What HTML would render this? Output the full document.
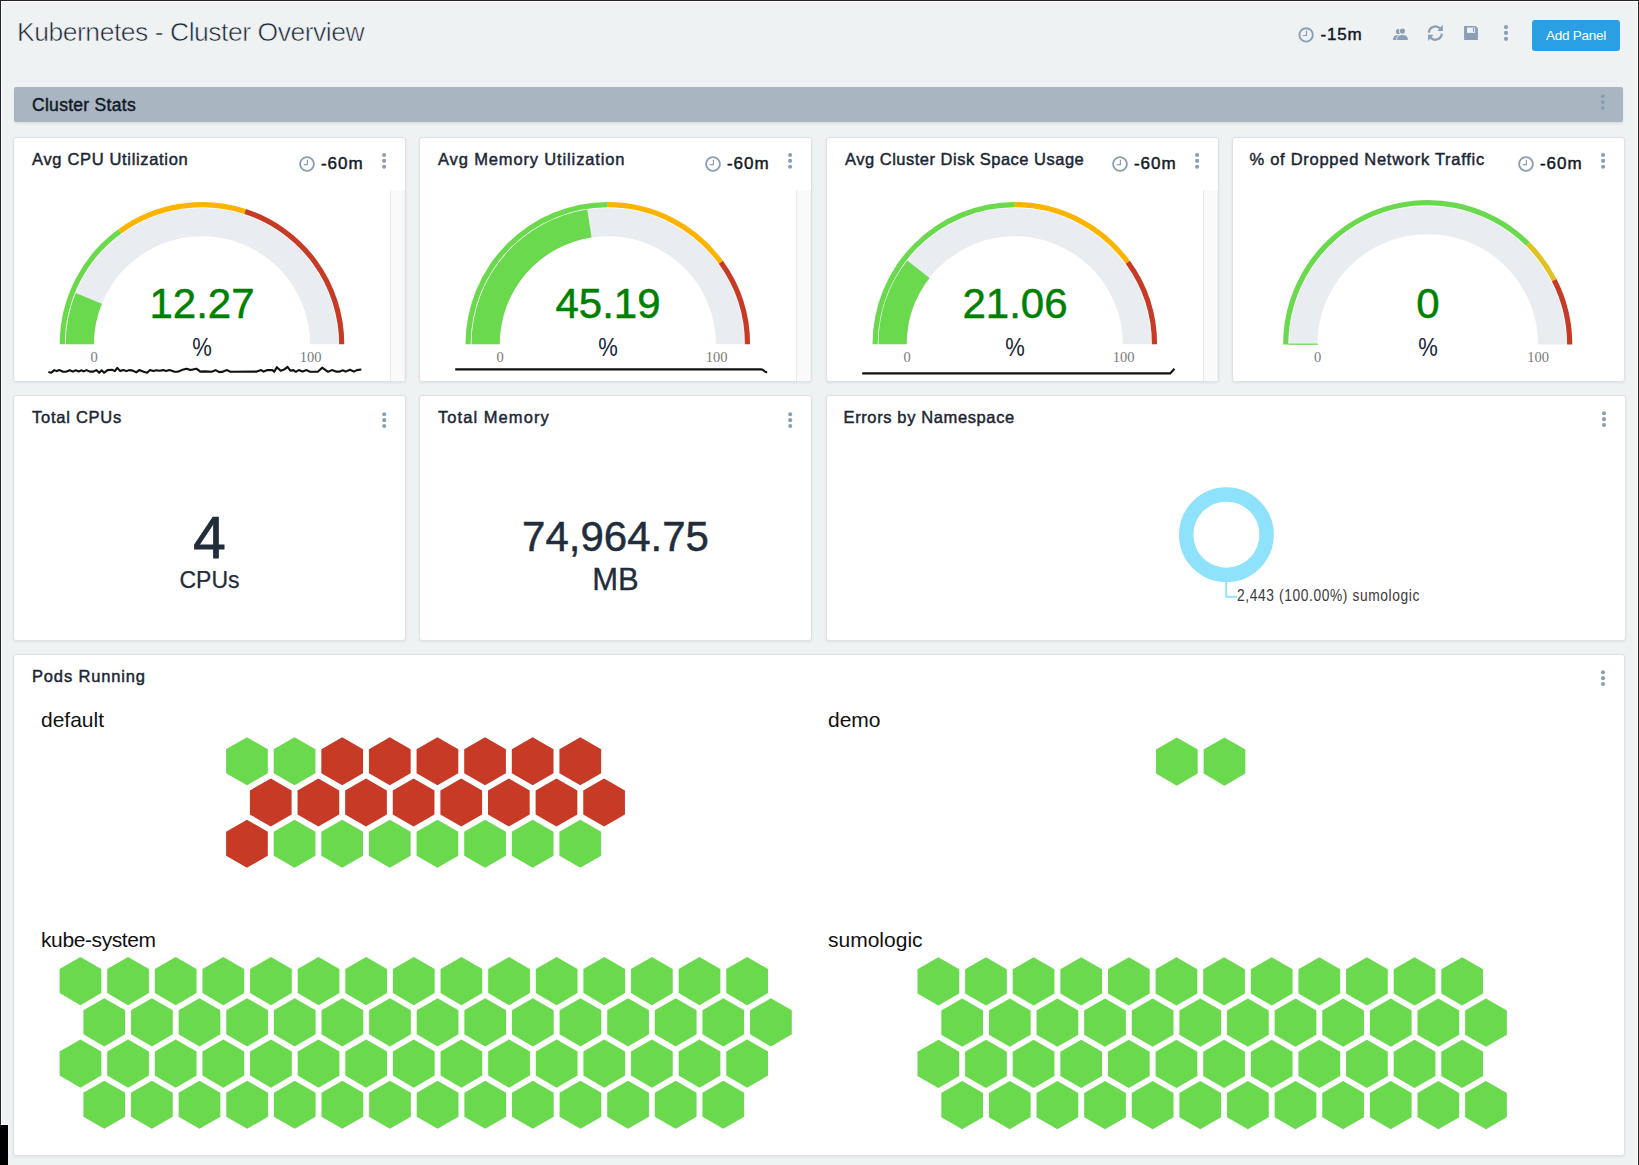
<!DOCTYPE html><html><head><meta charset="utf-8"><style>
*{margin:0;padding:0;box-sizing:border-box}
html,body{width:1639px;height:1165px;overflow:hidden;background:#eff2f3;font-family:"Liberation Sans", sans-serif;}
.abs{position:absolute;white-space:nowrap;line-height:1}
.panel{position:absolute;background:#fff;border:1px solid #dde2e7;border-radius:3px;box-shadow:0 1px 3px rgba(0,0,0,0.07)}
.ttl{position:absolute;font-size:16.5px;color:#1b2634;-webkit-text-stroke:0.45px #1b2634;white-space:nowrap;line-height:1}
.med{-webkit-text-stroke:0.45px currentColor}
svg{position:absolute;left:0;top:0}
</style></head><body>
<div style="position:absolute;left:1px;top:1px;width:1637px;height:1164px;border-top:1px solid #fff;border-left:1px solid #fff;border-right:1px solid #fff"></div>
<div style="position:absolute;left:0;top:0;width:1639px;height:1px;background:#232625"></div>
<div style="position:absolute;left:0;top:0;width:1px;height:1165px;background:#232625"></div>
<div style="position:absolute;left:1638px;top:0;width:1px;height:1165px;background:#232625"></div>
<div class="abs" style="left:17px;top:18.5px;font-size:26.5px;letter-spacing:-0.47px;color:#1a2533;-webkit-text-stroke:0.6px #eff2f3;">Kubernetes - Cluster Overview</div>
<div class="abs" style="left:1320.5px;top:25.8px;font-size:17px;letter-spacing:0.85px;-webkit-text-stroke:0.45px #111a24;color:#111a24;">-15m</div>
<div style="position:absolute;left:1532px;top:20px;width:88px;height:31px;background:#2a9fe4;border-radius:3px"></div>
<div class="abs" style="left:1546px;top:28.5px;font-size:13.5px;letter-spacing:-0.25px;color:#fff;">Add Panel</div>
<div style="position:absolute;left:14px;top:87px;width:1609px;height:34.5px;background:#aab5c2;border-radius:2px;box-shadow:0 2px 3px rgba(0,0,0,0.08)"></div>
<div class="abs" style="left:32px;top:97px;font-size:17.5px;letter-spacing:0.29px;-webkit-text-stroke:0.45px #111b27;color:#111b27;">Cluster Stats</div>
<div class="panel" style="left:13px;top:137px;width:393px;height:245px"></div>
<div class="ttl" style="left:32px;top:151px;letter-spacing:0.67px">Avg CPU Utilization</div>
<div class="abs" style="left:321px;top:155.2px;font-size:17px;letter-spacing:0.95px;-webkit-text-stroke:0.45px #111a24;color:#111a24">-60m</div>
<div class="panel" style="left:419px;top:137px;width:393px;height:245px"></div>
<div class="ttl" style="left:438px;top:151px;letter-spacing:0.86px">Avg Memory Utilization</div>
<div class="abs" style="left:727px;top:155.2px;font-size:17px;letter-spacing:0.95px;-webkit-text-stroke:0.45px #111a24;color:#111a24">-60m</div>
<div class="panel" style="left:826px;top:137px;width:393px;height:245px"></div>
<div class="ttl" style="left:845px;top:151px;letter-spacing:0.5px">Avg Cluster Disk Space Usage</div>
<div class="abs" style="left:1134px;top:155.2px;font-size:17px;letter-spacing:0.95px;-webkit-text-stroke:0.45px #111a24;color:#111a24">-60m</div>
<div class="panel" style="left:1232px;top:137px;width:393px;height:245px"></div>
<div class="ttl" style="left:1249.5px;top:151px;letter-spacing:0.72px">% of Dropped Network Traffic</div>
<div class="abs" style="left:1540px;top:155.2px;font-size:17px;letter-spacing:0.95px;-webkit-text-stroke:0.45px #111a24;color:#111a24">-60m</div>
<div class="panel" style="left:13px;top:395px;width:393px;height:246px"></div>
<div class="ttl" style="left:32px;top:409px;letter-spacing:0.75px">Total CPUs</div>
<div class="panel" style="left:419px;top:395px;width:393px;height:246px"></div>
<div class="ttl" style="left:438px;top:409px;letter-spacing:1.06px">Total Memory</div>
<div class="panel" style="left:826px;top:395px;width:800px;height:246px"></div>
<div class="ttl" style="left:843.5px;top:409px;letter-spacing:0.62px">Errors by Namespace</div>
<div class="panel" style="left:13px;top:654px;width:1612px;height:502px"></div>
<div class="ttl" style="left:32px;top:668px;letter-spacing:.84px">Pods Running</div>
<div class="abs" style="left:0;top:283px;width:404px;text-align:center;font-size:42px;-webkit-text-stroke:0.5px #008000;color:#008000">12.27</div>
<div class="abs" style="left:406px;top:283px;width:404px;text-align:center;font-size:42px;-webkit-text-stroke:0.5px #008000;color:#008000">45.19</div>
<div class="abs" style="left:813px;top:283px;width:404px;text-align:center;font-size:42px;-webkit-text-stroke:0.5px #008000;color:#008000">21.06</div>
<div class="abs" style="left:1226px;top:283px;width:404px;text-align:center;font-size:42px;-webkit-text-stroke:0.5px #008000;color:#008000">0</div>
<div class="abs" style="left:152px;top:334.5px;width:100px;text-align:center;font-size:25px;transform:scaleX(0.88);color:#1b2634">%</div>
<div class="abs" style="left:558px;top:334.5px;width:100px;text-align:center;font-size:25px;transform:scaleX(0.88);color:#1b2634">%</div>
<div class="abs" style="left:965px;top:334.5px;width:100px;text-align:center;font-size:25px;transform:scaleX(0.88);color:#1b2634">%</div>
<div class="abs" style="left:1378px;top:334.5px;width:100px;text-align:center;font-size:25px;transform:scaleX(0.88);color:#1b2634">%</div>
<div class="abs" style="left:74px;top:350px;width:40px;text-align:center;font-family:'Liberation Serif',serif;font-size:14.5px;color:#7a7a7a">0</div>
<div class="abs" style="left:290.5px;top:350px;width:40px;text-align:center;font-family:'Liberation Serif',serif;font-size:14.5px;color:#7a7a7a">100</div>
<div class="abs" style="left:480px;top:350px;width:40px;text-align:center;font-family:'Liberation Serif',serif;font-size:14.5px;color:#7a7a7a">0</div>
<div class="abs" style="left:696.5px;top:350px;width:40px;text-align:center;font-family:'Liberation Serif',serif;font-size:14.5px;color:#7a7a7a">100</div>
<div class="abs" style="left:887px;top:350px;width:40px;text-align:center;font-family:'Liberation Serif',serif;font-size:14.5px;color:#7a7a7a">0</div>
<div class="abs" style="left:1103.5px;top:350px;width:40px;text-align:center;font-family:'Liberation Serif',serif;font-size:14.5px;color:#7a7a7a">100</div>
<div class="abs" style="left:1297.5px;top:350px;width:40px;text-align:center;font-family:'Liberation Serif',serif;font-size:14.5px;color:#7a7a7a">0</div>
<div class="abs" style="left:1518px;top:350px;width:40px;text-align:center;font-family:'Liberation Serif',serif;font-size:14.5px;color:#7a7a7a">100</div>
<div style="position:absolute;left:390px;top:190px;width:15px;height:191px;background:#fafafa;border-left:1px solid #e9e9e9;border-right:1px solid #f0f0f0"></div>
<div style="position:absolute;left:796px;top:190px;width:15px;height:191px;background:#fafafa;border-left:1px solid #e9e9e9;border-right:1px solid #f0f0f0"></div>
<div style="position:absolute;left:1203px;top:190px;width:15px;height:191px;background:#fafafa;border-left:1px solid #e9e9e9;border-right:1px solid #f0f0f0"></div>
<div class="abs" style="left:14px;top:508.5px;width:391px;text-align:center;font-size:59px;-webkit-text-stroke:0.75px #222d3b;color:#222d3b">4</div>
<div class="abs" style="left:14px;top:569px;width:391px;text-align:center;font-size:23px;-webkit-text-stroke:0.25px #222d3b;color:#222d3b">CPUs</div>
<div class="abs" style="left:420px;top:515.7px;width:391px;text-align:center;font-size:42px;-webkit-text-stroke:0.5px #222d3b;color:#222d3b">74,964.75</div>
<div class="abs" style="left:420px;top:564px;width:391px;text-align:center;font-size:31px;-webkit-text-stroke:0.35px #222d3b;color:#222d3b">MB</div>
<div class="abs" style="left:1237px;top:588px;font-size:16px;color:#3a3a3a;transform-origin:0 0;transform:scaleX(0.86);letter-spacing:0.72px">2,443 (100.00%) sumologic</div>
<div class="abs" style="left:41px;top:709px;font-size:21px;letter-spacing:0px;color:#111">default</div>
<div class="abs" style="left:828px;top:709px;font-size:21px;letter-spacing:0px;color:#111">demo</div>
<div class="abs" style="left:41px;top:929px;font-size:21px;letter-spacing:-0.4px;color:#111">kube-system</div>
<div class="abs" style="left:828px;top:929px;font-size:21px;letter-spacing:0px;color:#111">sumologic</div>
<svg width="1639" height="1165" viewBox="0 0 1639 1165">
<path d="M65.70,344.30 A136.3,136.3 0 0 1 338.30,344.30 L310.10,344.30 A108.10000000000001,108.10000000000001 0 0 0 93.90,344.30 Z" fill="#e9edf1"/>
<path d="M59.70,344.30 A142.3,142.3 0 0 1 118.36,229.18 L121.41,233.38 A137.10000000000002,137.10000000000002 0 0 0 64.90,344.30 Z" fill="#6ad94d"/>
<path d="M118.36,229.18 A142.3,142.3 0 0 1 245.97,208.96 L244.37,213.91 A137.10000000000002,137.10000000000002 0 0 0 121.41,233.38 Z" fill="#fdb300"/>
<path d="M245.97,208.96 A142.3,142.3 0 0 1 344.30,344.30 L339.10,344.30 A137.10000000000002,137.10000000000002 0 0 0 244.37,213.91 Z" fill="#c63a26"/>
<path d="M65.70,344.30 A136.3,136.3 0 0 1 75.70,293.05 L101.83,303.65 A108.10000000000001,108.10000000000001 0 0 0 93.90,344.30 Z" fill="#6ad94d"/>
<path d="M471.50,344.30 A136.3,136.3 0 0 1 744.10,344.30 L715.90,344.30 A108.10000000000001,108.10000000000001 0 0 0 499.70,344.30 Z" fill="#e9edf1"/>
<path d="M465.50,344.30 A142.3,142.3 0 0 1 607.80,202.00 L607.80,207.20 A137.10000000000002,137.10000000000002 0 0 0 470.70,344.30 Z" fill="#6ad94d"/>
<path d="M607.80,202.00 A142.3,142.3 0 0 1 722.92,260.66 L718.72,263.71 A137.10000000000002,137.10000000000002 0 0 0 607.80,207.20 Z" fill="#fdb300"/>
<path d="M722.92,260.66 A142.3,142.3 0 0 1 750.10,344.30 L744.90,344.30 A137.10000000000002,137.10000000000002 0 0 0 718.72,263.71 Z" fill="#c63a26"/>
<path d="M471.50,344.30 A136.3,136.3 0 0 1 587.28,209.55 L591.53,237.43 A108.10000000000001,108.10000000000001 0 0 0 499.70,344.30 Z" fill="#6ad94d"/>
<path d="M878.50,344.30 A136.3,136.3 0 0 1 1151.10,344.30 L1122.90,344.30 A108.10000000000001,108.10000000000001 0 0 0 906.70,344.30 Z" fill="#e9edf1"/>
<path d="M872.50,344.30 A142.3,142.3 0 0 1 1014.80,202.00 L1014.80,207.20 A137.10000000000002,137.10000000000002 0 0 0 877.70,344.30 Z" fill="#6ad94d"/>
<path d="M1014.80,202.00 A142.3,142.3 0 0 1 1129.92,260.66 L1125.72,263.71 A137.10000000000002,137.10000000000002 0 0 0 1014.80,207.20 Z" fill="#fdb300"/>
<path d="M1129.92,260.66 A142.3,142.3 0 0 1 1157.10,344.30 L1151.90,344.30 A137.10000000000002,137.10000000000002 0 0 0 1125.72,263.71 Z" fill="#c63a26"/>
<path d="M878.50,344.30 A136.3,136.3 0 0 1 907.26,260.56 L929.51,277.88 A108.10000000000001,108.10000000000001 0 0 0 906.70,344.30 Z" fill="#6ad94d"/>
<path d="M1289.10,344.60 A138.6,138.6 0 0 1 1566.30,344.60 L1538.10,344.60 A110.39999999999999,110.39999999999999 0 0 0 1317.30,344.60 Z" fill="#e9edf1"/>
<path d="M1283.10,344.60 A144.6,144.6 0 0 1 1529.95,242.35 L1526.27,246.03 A139.4,139.4 0 0 0 1288.30,344.60 Z" fill="#6ad94d"/>
<path d="M1529.95,242.35 A144.6,144.6 0 0 1 1556.54,278.95 L1551.91,281.31 A139.4,139.4 0 0 0 1526.27,246.03 Z" fill="#e2c221"/>
<path d="M1556.54,278.95 A144.6,144.6 0 0 1 1572.30,344.60 L1567.10,344.60 A139.4,139.4 0 0 0 1551.91,281.31 Z" fill="#c63a26"/>
<rect x="1288.5" y="343.6" width="29.4" height="1.2" fill="#6ad94d"/>
<circle cx="1306.1" cy="34.9" r="6.7" fill="none" stroke="#8a9fb6" stroke-width="1.9"/><path d="M1306.5,30.599999999999998 V35.5 H1302.8999999999999" fill="none" stroke="#8a9fb6" stroke-width="1.2"/>
<circle cx="307" cy="164" r="6.8999999999999995" fill="none" stroke="#8a9fb6" stroke-width="1.9"/><path d="M307.4,159.7 V164.6 H303.8" fill="none" stroke="#8a9fb6" stroke-width="1.2"/>
<circle cx="713" cy="164" r="6.8999999999999995" fill="none" stroke="#8a9fb6" stroke-width="1.9"/><path d="M713.4,159.7 V164.6 H709.8" fill="none" stroke="#8a9fb6" stroke-width="1.2"/>
<circle cx="1120" cy="164" r="6.8999999999999995" fill="none" stroke="#8a9fb6" stroke-width="1.9"/><path d="M1120.4,159.7 V164.6 H1116.8" fill="none" stroke="#8a9fb6" stroke-width="1.2"/>
<circle cx="1526" cy="164" r="6.8999999999999995" fill="none" stroke="#8a9fb6" stroke-width="1.9"/><path d="M1526.4,159.7 V164.6 H1522.8" fill="none" stroke="#8a9fb6" stroke-width="1.2"/>
<circle cx="384.1" cy="155.0" r="2.05" fill="#8a9fb6"/><circle cx="384.1" cy="160.85" r="2.05" fill="#8a9fb6"/><circle cx="384.1" cy="166.7" r="2.05" fill="#8a9fb6"/>
<circle cx="790.1" cy="155.0" r="2.05" fill="#8a9fb6"/><circle cx="790.1" cy="160.85" r="2.05" fill="#8a9fb6"/><circle cx="790.1" cy="166.7" r="2.05" fill="#8a9fb6"/>
<circle cx="1197.1" cy="155.0" r="2.05" fill="#8a9fb6"/><circle cx="1197.1" cy="160.85" r="2.05" fill="#8a9fb6"/><circle cx="1197.1" cy="166.7" r="2.05" fill="#8a9fb6"/>
<circle cx="1603.1" cy="155.0" r="2.05" fill="#8a9fb6"/><circle cx="1603.1" cy="160.85" r="2.05" fill="#8a9fb6"/><circle cx="1603.1" cy="166.7" r="2.05" fill="#8a9fb6"/>
<circle cx="384.2" cy="414.3" r="2.05" fill="#8a9fb6"/><circle cx="384.2" cy="420.15000000000003" r="2.05" fill="#8a9fb6"/><circle cx="384.2" cy="426.0" r="2.05" fill="#8a9fb6"/>
<circle cx="790.2" cy="414.3" r="2.05" fill="#8a9fb6"/><circle cx="790.2" cy="420.15000000000003" r="2.05" fill="#8a9fb6"/><circle cx="790.2" cy="426.0" r="2.05" fill="#8a9fb6"/>
<circle cx="1604" cy="413.3" r="2.05" fill="#8a9fb6"/><circle cx="1604" cy="419.15000000000003" r="2.05" fill="#8a9fb6"/><circle cx="1604" cy="425.0" r="2.05" fill="#8a9fb6"/>
<circle cx="1603" cy="672.3" r="2.05" fill="#8a9fb6"/><circle cx="1603" cy="678.15" r="2.05" fill="#8a9fb6"/><circle cx="1603" cy="684.0" r="2.05" fill="#8a9fb6"/>
<circle cx="1506" cy="27.1" r="2.15" fill="#8a9fb6"/><circle cx="1506" cy="32.95" r="2.15" fill="#8a9fb6"/><circle cx="1506" cy="38.8" r="2.15" fill="#8a9fb6"/>
<circle cx="1602.7" cy="96.24" r="2.0" fill="#8a9fb6"/><circle cx="1602.7" cy="102.07" r="2.0" fill="#8a9fb6"/><circle cx="1602.7" cy="107.89999999999999" r="2.0" fill="#8a9fb6"/>
<g transform="translate(1390,22)"><circle cx="8.45" cy="9.55" r="2.55" fill="#8a9fb6"/><g transform="translate(-4,0)"><path d="M7.1,17.9 L7.1,16.4 C7.6,14.2 9.2,13 12.4,13 C15.6,13 17.2,14.2 17.8,16.4 L17.8,17.9 Z" fill="#8a9fb6"/></g><circle cx="12.45" cy="9.05" r="3.5" fill="#eff2f3"/><path d="M7.1,17.9 L7.1,16.4 C7.6,14.2 9.2,13 12.4,13 C15.6,13 17.2,14.2 17.8,16.4 L17.8,17.9 Z" fill="#8a9fb6" stroke="#eff2f3" stroke-width="1.6"/><path d="M7.1,17.9 L7.1,16.4 C7.6,14.2 9.2,13 12.4,13 C15.6,13 17.2,14.2 17.8,16.4 L17.8,17.9 Z" fill="#8a9fb6"/><circle cx="12.45" cy="9.05" r="2.55" fill="#8a9fb6"/></g>
<g transform="translate(1424,22)" fill="none" stroke="#8a9fb6" stroke-width="2.2"><path d="M4.8,10.6 A6.6,6.6 0 0 1 16.2,6.6"/><path d="M17.8,11.6 A6.6,6.6 0 0 1 6.4,15.6"/></g><g transform="translate(1424,22)" fill="#8a9fb6"><path d="M18.8,2.8 L18.9,9.1 L13.3,8.9 Z"/><path d="M4.1,19.0 L4.0,12.7 L9.6,12.8 Z"/></g>
<g transform="translate(1460,22)"><path d="M4.06,4.06 H15.7 L17.9,6.3 V17.9 H4.06 Z" fill="#8a9fb6"/><rect x="7" y="5.5" width="8.1" height="5.4" fill="#eff2f3"/><rect x="13" y="6" width="1.2" height="3.8" fill="#8a9fb6"/></g>
<polyline points="48.4,372.1 51.3,372.8 54.3,370.1 56.7,371.1 59.6,370.1 63.1,371.8 66.5,371.6 69.9,370.3 72.8,371.6 75.8,370.3 78.7,371.4 81.6,370.3 83.6,371.4 86.5,370.1 89.9,371.6 93.3,371.6 96.3,370.1 99.2,372.8 101.6,370.3 104.1,372.8 107.5,370.1 112.4,369.8 114.8,371.1 117.3,367.9 120.2,371.1 123.1,370.1 126.5,371.1 129,370.1 132.9,370.6 136.3,372.4 139.2,370.1 143.6,371.8 147.1,372.8 150,370.1 153.4,371.1 156.3,370.3 159.7,370.8 163.2,370.1 166.1,371.1 169.5,370.1 173.9,371.6 177.8,371.8 181.7,370.1 186.6,368.7 190.5,370.1 196.4,368.7 200.3,371.6 205,371.4 211.8,371.8 215.7,370.1 219.2,372.1 223.1,371.6 227,370.1 230.4,371.8 256.8,371.6 261.1,370.1 263.6,371.6 267.5,370.1 272.4,370.1 274.3,371.8 276.8,367.2 280.7,370.8 284.1,369.6 287.5,366.9 290.4,370.6 293.4,370.1 295.8,371.8 298.7,370.1 302.6,371.6 306.6,370.1 310,371.8 317.8,371.8 322.2,367.7 328,371.8 332,370.1 335.9,371.6 339.8,371.6 342.7,370.3 345.6,371.6 350,369.8 353.9,371.6 356.9,370.1 361.3,369.5" fill="none" stroke="#111" stroke-width="2.1" stroke-linejoin="round"/>
<path d="M455.2,369.4 H760.8 Q763,369.4 764.5,371.2 Q765.5,372.2 767.2,372.2" fill="none" stroke="#111" stroke-width="2.1"/>
<path d="M862.2,373.4 H1170.2 L1174.4,368.8" fill="none" stroke="#111" stroke-width="2.1"/>
<circle cx="1226.4" cy="534.7" r="40.2" fill="none" stroke="#8ee2fc" stroke-width="14.4"/>
<path d="M1226.2,582 V596.8 H1237" fill="none" stroke="#8ee2fc" stroke-width="1.8"/>
<polygon points="246.95,737.20 267.80,749.24 267.80,773.31 246.95,785.35 226.10,773.31 226.10,749.24" fill="#6ad94d"/>
<polygon points="294.57,737.20 315.42,749.24 315.42,773.31 294.57,785.35 273.72,773.31 273.72,749.24" fill="#6ad94d"/>
<polygon points="342.19,737.20 363.04,749.24 363.04,773.31 342.19,785.35 321.34,773.31 321.34,749.24" fill="#c63a26"/>
<polygon points="389.81,737.20 410.66,749.24 410.66,773.31 389.81,785.35 368.96,773.31 368.96,749.24" fill="#c63a26"/>
<polygon points="437.43,737.20 458.28,749.24 458.28,773.31 437.43,785.35 416.58,773.31 416.58,749.24" fill="#c63a26"/>
<polygon points="485.05,737.20 505.90,749.24 505.90,773.31 485.05,785.35 464.20,773.31 464.20,749.24" fill="#c63a26"/>
<polygon points="532.67,737.20 553.52,749.24 553.52,773.31 532.67,785.35 511.82,773.31 511.82,749.24" fill="#c63a26"/>
<polygon points="580.29,737.20 601.14,749.24 601.14,773.31 580.29,785.35 559.44,773.31 559.44,749.24" fill="#c63a26"/>
<polygon points="270.76,778.44 291.61,790.48 291.61,814.55 270.76,826.59 249.91,814.55 249.91,790.48" fill="#c63a26"/>
<polygon points="318.38,778.44 339.23,790.48 339.23,814.55 318.38,826.59 297.53,814.55 297.53,790.48" fill="#c63a26"/>
<polygon points="366.00,778.44 386.85,790.48 386.85,814.55 366.00,826.59 345.15,814.55 345.15,790.48" fill="#c63a26"/>
<polygon points="413.62,778.44 434.47,790.48 434.47,814.55 413.62,826.59 392.77,814.55 392.77,790.48" fill="#c63a26"/>
<polygon points="461.24,778.44 482.09,790.48 482.09,814.55 461.24,826.59 440.39,814.55 440.39,790.48" fill="#c63a26"/>
<polygon points="508.86,778.44 529.71,790.48 529.71,814.55 508.86,826.59 488.01,814.55 488.01,790.48" fill="#c63a26"/>
<polygon points="556.48,778.44 577.33,790.48 577.33,814.55 556.48,826.59 535.63,814.55 535.63,790.48" fill="#c63a26"/>
<polygon points="604.10,778.44 624.95,790.48 624.95,814.55 604.10,826.59 583.25,814.55 583.25,790.48" fill="#c63a26"/>
<polygon points="246.95,819.68 267.80,831.72 267.80,855.79 246.95,867.83 226.10,855.79 226.10,831.72" fill="#c63a26"/>
<polygon points="294.57,819.68 315.42,831.72 315.42,855.79 294.57,867.83 273.72,855.79 273.72,831.72" fill="#6ad94d"/>
<polygon points="342.19,819.68 363.04,831.72 363.04,855.79 342.19,867.83 321.34,855.79 321.34,831.72" fill="#6ad94d"/>
<polygon points="389.81,819.68 410.66,831.72 410.66,855.79 389.81,867.83 368.96,855.79 368.96,831.72" fill="#6ad94d"/>
<polygon points="437.43,819.68 458.28,831.72 458.28,855.79 437.43,867.83 416.58,855.79 416.58,831.72" fill="#6ad94d"/>
<polygon points="485.05,819.68 505.90,831.72 505.90,855.79 485.05,867.83 464.20,855.79 464.20,831.72" fill="#6ad94d"/>
<polygon points="532.67,819.68 553.52,831.72 553.52,855.79 532.67,867.83 511.82,855.79 511.82,831.72" fill="#6ad94d"/>
<polygon points="580.29,819.68 601.14,831.72 601.14,855.79 580.29,867.83 559.44,855.79 559.44,831.72" fill="#6ad94d"/>
<polygon points="1176.85,737.50 1197.70,749.54 1197.70,773.61 1176.85,785.65 1156.00,773.61 1156.00,749.54" fill="#6ad94d"/>
<polygon points="1224.47,737.50 1245.32,749.54 1245.32,773.61 1224.47,785.65 1203.62,773.61 1203.62,749.54" fill="#6ad94d"/>
<polygon points="80.45,957.00 101.30,969.04 101.30,993.11 80.45,1005.15 59.60,993.11 59.60,969.04" fill="#6ad94d"/>
<polygon points="128.07,957.00 148.92,969.04 148.92,993.11 128.07,1005.15 107.22,993.11 107.22,969.04" fill="#6ad94d"/>
<polygon points="175.69,957.00 196.54,969.04 196.54,993.11 175.69,1005.15 154.84,993.11 154.84,969.04" fill="#6ad94d"/>
<polygon points="223.31,957.00 244.16,969.04 244.16,993.11 223.31,1005.15 202.46,993.11 202.46,969.04" fill="#6ad94d"/>
<polygon points="270.93,957.00 291.78,969.04 291.78,993.11 270.93,1005.15 250.08,993.11 250.08,969.04" fill="#6ad94d"/>
<polygon points="318.55,957.00 339.40,969.04 339.40,993.11 318.55,1005.15 297.70,993.11 297.70,969.04" fill="#6ad94d"/>
<polygon points="366.17,957.00 387.02,969.04 387.02,993.11 366.17,1005.15 345.32,993.11 345.32,969.04" fill="#6ad94d"/>
<polygon points="413.79,957.00 434.64,969.04 434.64,993.11 413.79,1005.15 392.94,993.11 392.94,969.04" fill="#6ad94d"/>
<polygon points="461.41,957.00 482.26,969.04 482.26,993.11 461.41,1005.15 440.56,993.11 440.56,969.04" fill="#6ad94d"/>
<polygon points="509.03,957.00 529.88,969.04 529.88,993.11 509.03,1005.15 488.18,993.11 488.18,969.04" fill="#6ad94d"/>
<polygon points="556.65,957.00 577.50,969.04 577.50,993.11 556.65,1005.15 535.80,993.11 535.80,969.04" fill="#6ad94d"/>
<polygon points="604.27,957.00 625.12,969.04 625.12,993.11 604.27,1005.15 583.42,993.11 583.42,969.04" fill="#6ad94d"/>
<polygon points="651.89,957.00 672.74,969.04 672.74,993.11 651.89,1005.15 631.04,993.11 631.04,969.04" fill="#6ad94d"/>
<polygon points="699.51,957.00 720.36,969.04 720.36,993.11 699.51,1005.15 678.66,993.11 678.66,969.04" fill="#6ad94d"/>
<polygon points="747.13,957.00 767.98,969.04 767.98,993.11 747.13,1005.15 726.28,993.11 726.28,969.04" fill="#6ad94d"/>
<polygon points="104.26,998.24 125.11,1010.28 125.11,1034.35 104.26,1046.39 83.41,1034.35 83.41,1010.28" fill="#6ad94d"/>
<polygon points="151.88,998.24 172.73,1010.28 172.73,1034.35 151.88,1046.39 131.03,1034.35 131.03,1010.28" fill="#6ad94d"/>
<polygon points="199.50,998.24 220.35,1010.28 220.35,1034.35 199.50,1046.39 178.65,1034.35 178.65,1010.28" fill="#6ad94d"/>
<polygon points="247.12,998.24 267.97,1010.28 267.97,1034.35 247.12,1046.39 226.27,1034.35 226.27,1010.28" fill="#6ad94d"/>
<polygon points="294.74,998.24 315.59,1010.28 315.59,1034.35 294.74,1046.39 273.89,1034.35 273.89,1010.28" fill="#6ad94d"/>
<polygon points="342.36,998.24 363.21,1010.28 363.21,1034.35 342.36,1046.39 321.51,1034.35 321.51,1010.28" fill="#6ad94d"/>
<polygon points="389.98,998.24 410.83,1010.28 410.83,1034.35 389.98,1046.39 369.13,1034.35 369.13,1010.28" fill="#6ad94d"/>
<polygon points="437.60,998.24 458.45,1010.28 458.45,1034.35 437.60,1046.39 416.75,1034.35 416.75,1010.28" fill="#6ad94d"/>
<polygon points="485.22,998.24 506.07,1010.28 506.07,1034.35 485.22,1046.39 464.37,1034.35 464.37,1010.28" fill="#6ad94d"/>
<polygon points="532.84,998.24 553.69,1010.28 553.69,1034.35 532.84,1046.39 511.99,1034.35 511.99,1010.28" fill="#6ad94d"/>
<polygon points="580.46,998.24 601.31,1010.28 601.31,1034.35 580.46,1046.39 559.61,1034.35 559.61,1010.28" fill="#6ad94d"/>
<polygon points="628.08,998.24 648.93,1010.28 648.93,1034.35 628.08,1046.39 607.23,1034.35 607.23,1010.28" fill="#6ad94d"/>
<polygon points="675.70,998.24 696.55,1010.28 696.55,1034.35 675.70,1046.39 654.85,1034.35 654.85,1010.28" fill="#6ad94d"/>
<polygon points="723.32,998.24 744.17,1010.28 744.17,1034.35 723.32,1046.39 702.47,1034.35 702.47,1010.28" fill="#6ad94d"/>
<polygon points="770.94,998.24 791.79,1010.28 791.79,1034.35 770.94,1046.39 750.09,1034.35 750.09,1010.28" fill="#6ad94d"/>
<polygon points="80.45,1039.48 101.30,1051.52 101.30,1075.59 80.45,1087.63 59.60,1075.59 59.60,1051.52" fill="#6ad94d"/>
<polygon points="128.07,1039.48 148.92,1051.52 148.92,1075.59 128.07,1087.63 107.22,1075.59 107.22,1051.52" fill="#6ad94d"/>
<polygon points="175.69,1039.48 196.54,1051.52 196.54,1075.59 175.69,1087.63 154.84,1075.59 154.84,1051.52" fill="#6ad94d"/>
<polygon points="223.31,1039.48 244.16,1051.52 244.16,1075.59 223.31,1087.63 202.46,1075.59 202.46,1051.52" fill="#6ad94d"/>
<polygon points="270.93,1039.48 291.78,1051.52 291.78,1075.59 270.93,1087.63 250.08,1075.59 250.08,1051.52" fill="#6ad94d"/>
<polygon points="318.55,1039.48 339.40,1051.52 339.40,1075.59 318.55,1087.63 297.70,1075.59 297.70,1051.52" fill="#6ad94d"/>
<polygon points="366.17,1039.48 387.02,1051.52 387.02,1075.59 366.17,1087.63 345.32,1075.59 345.32,1051.52" fill="#6ad94d"/>
<polygon points="413.79,1039.48 434.64,1051.52 434.64,1075.59 413.79,1087.63 392.94,1075.59 392.94,1051.52" fill="#6ad94d"/>
<polygon points="461.41,1039.48 482.26,1051.52 482.26,1075.59 461.41,1087.63 440.56,1075.59 440.56,1051.52" fill="#6ad94d"/>
<polygon points="509.03,1039.48 529.88,1051.52 529.88,1075.59 509.03,1087.63 488.18,1075.59 488.18,1051.52" fill="#6ad94d"/>
<polygon points="556.65,1039.48 577.50,1051.52 577.50,1075.59 556.65,1087.63 535.80,1075.59 535.80,1051.52" fill="#6ad94d"/>
<polygon points="604.27,1039.48 625.12,1051.52 625.12,1075.59 604.27,1087.63 583.42,1075.59 583.42,1051.52" fill="#6ad94d"/>
<polygon points="651.89,1039.48 672.74,1051.52 672.74,1075.59 651.89,1087.63 631.04,1075.59 631.04,1051.52" fill="#6ad94d"/>
<polygon points="699.51,1039.48 720.36,1051.52 720.36,1075.59 699.51,1087.63 678.66,1075.59 678.66,1051.52" fill="#6ad94d"/>
<polygon points="747.13,1039.48 767.98,1051.52 767.98,1075.59 747.13,1087.63 726.28,1075.59 726.28,1051.52" fill="#6ad94d"/>
<polygon points="104.26,1080.72 125.11,1092.76 125.11,1116.83 104.26,1128.87 83.41,1116.83 83.41,1092.76" fill="#6ad94d"/>
<polygon points="151.88,1080.72 172.73,1092.76 172.73,1116.83 151.88,1128.87 131.03,1116.83 131.03,1092.76" fill="#6ad94d"/>
<polygon points="199.50,1080.72 220.35,1092.76 220.35,1116.83 199.50,1128.87 178.65,1116.83 178.65,1092.76" fill="#6ad94d"/>
<polygon points="247.12,1080.72 267.97,1092.76 267.97,1116.83 247.12,1128.87 226.27,1116.83 226.27,1092.76" fill="#6ad94d"/>
<polygon points="294.74,1080.72 315.59,1092.76 315.59,1116.83 294.74,1128.87 273.89,1116.83 273.89,1092.76" fill="#6ad94d"/>
<polygon points="342.36,1080.72 363.21,1092.76 363.21,1116.83 342.36,1128.87 321.51,1116.83 321.51,1092.76" fill="#6ad94d"/>
<polygon points="389.98,1080.72 410.83,1092.76 410.83,1116.83 389.98,1128.87 369.13,1116.83 369.13,1092.76" fill="#6ad94d"/>
<polygon points="437.60,1080.72 458.45,1092.76 458.45,1116.83 437.60,1128.87 416.75,1116.83 416.75,1092.76" fill="#6ad94d"/>
<polygon points="485.22,1080.72 506.07,1092.76 506.07,1116.83 485.22,1128.87 464.37,1116.83 464.37,1092.76" fill="#6ad94d"/>
<polygon points="532.84,1080.72 553.69,1092.76 553.69,1116.83 532.84,1128.87 511.99,1116.83 511.99,1092.76" fill="#6ad94d"/>
<polygon points="580.46,1080.72 601.31,1092.76 601.31,1116.83 580.46,1128.87 559.61,1116.83 559.61,1092.76" fill="#6ad94d"/>
<polygon points="628.08,1080.72 648.93,1092.76 648.93,1116.83 628.08,1128.87 607.23,1116.83 607.23,1092.76" fill="#6ad94d"/>
<polygon points="675.70,1080.72 696.55,1092.76 696.55,1116.83 675.70,1128.87 654.85,1116.83 654.85,1092.76" fill="#6ad94d"/>
<polygon points="723.32,1080.72 744.17,1092.76 744.17,1116.83 723.32,1128.87 702.47,1116.83 702.47,1092.76" fill="#6ad94d"/>
<polygon points="938.35,957.30 959.20,969.34 959.20,993.41 938.35,1005.45 917.50,993.41 917.50,969.34" fill="#6ad94d"/>
<polygon points="985.97,957.30 1006.82,969.34 1006.82,993.41 985.97,1005.45 965.12,993.41 965.12,969.34" fill="#6ad94d"/>
<polygon points="1033.59,957.30 1054.44,969.34 1054.44,993.41 1033.59,1005.45 1012.74,993.41 1012.74,969.34" fill="#6ad94d"/>
<polygon points="1081.21,957.30 1102.06,969.34 1102.06,993.41 1081.21,1005.45 1060.36,993.41 1060.36,969.34" fill="#6ad94d"/>
<polygon points="1128.83,957.30 1149.68,969.34 1149.68,993.41 1128.83,1005.45 1107.98,993.41 1107.98,969.34" fill="#6ad94d"/>
<polygon points="1176.45,957.30 1197.30,969.34 1197.30,993.41 1176.45,1005.45 1155.60,993.41 1155.60,969.34" fill="#6ad94d"/>
<polygon points="1224.07,957.30 1244.92,969.34 1244.92,993.41 1224.07,1005.45 1203.22,993.41 1203.22,969.34" fill="#6ad94d"/>
<polygon points="1271.69,957.30 1292.54,969.34 1292.54,993.41 1271.69,1005.45 1250.84,993.41 1250.84,969.34" fill="#6ad94d"/>
<polygon points="1319.31,957.30 1340.16,969.34 1340.16,993.41 1319.31,1005.45 1298.46,993.41 1298.46,969.34" fill="#6ad94d"/>
<polygon points="1366.93,957.30 1387.78,969.34 1387.78,993.41 1366.93,1005.45 1346.08,993.41 1346.08,969.34" fill="#6ad94d"/>
<polygon points="1414.55,957.30 1435.40,969.34 1435.40,993.41 1414.55,1005.45 1393.70,993.41 1393.70,969.34" fill="#6ad94d"/>
<polygon points="1462.17,957.30 1483.02,969.34 1483.02,993.41 1462.17,1005.45 1441.32,993.41 1441.32,969.34" fill="#6ad94d"/>
<polygon points="962.16,998.54 983.01,1010.58 983.01,1034.65 962.16,1046.69 941.31,1034.65 941.31,1010.58" fill="#6ad94d"/>
<polygon points="1009.78,998.54 1030.63,1010.58 1030.63,1034.65 1009.78,1046.69 988.93,1034.65 988.93,1010.58" fill="#6ad94d"/>
<polygon points="1057.40,998.54 1078.25,1010.58 1078.25,1034.65 1057.40,1046.69 1036.55,1034.65 1036.55,1010.58" fill="#6ad94d"/>
<polygon points="1105.02,998.54 1125.87,1010.58 1125.87,1034.65 1105.02,1046.69 1084.17,1034.65 1084.17,1010.58" fill="#6ad94d"/>
<polygon points="1152.64,998.54 1173.49,1010.58 1173.49,1034.65 1152.64,1046.69 1131.79,1034.65 1131.79,1010.58" fill="#6ad94d"/>
<polygon points="1200.26,998.54 1221.11,1010.58 1221.11,1034.65 1200.26,1046.69 1179.41,1034.65 1179.41,1010.58" fill="#6ad94d"/>
<polygon points="1247.88,998.54 1268.73,1010.58 1268.73,1034.65 1247.88,1046.69 1227.03,1034.65 1227.03,1010.58" fill="#6ad94d"/>
<polygon points="1295.50,998.54 1316.35,1010.58 1316.35,1034.65 1295.50,1046.69 1274.65,1034.65 1274.65,1010.58" fill="#6ad94d"/>
<polygon points="1343.12,998.54 1363.97,1010.58 1363.97,1034.65 1343.12,1046.69 1322.27,1034.65 1322.27,1010.58" fill="#6ad94d"/>
<polygon points="1390.74,998.54 1411.59,1010.58 1411.59,1034.65 1390.74,1046.69 1369.89,1034.65 1369.89,1010.58" fill="#6ad94d"/>
<polygon points="1438.36,998.54 1459.21,1010.58 1459.21,1034.65 1438.36,1046.69 1417.51,1034.65 1417.51,1010.58" fill="#6ad94d"/>
<polygon points="1485.98,998.54 1506.83,1010.58 1506.83,1034.65 1485.98,1046.69 1465.13,1034.65 1465.13,1010.58" fill="#6ad94d"/>
<polygon points="938.35,1039.78 959.20,1051.82 959.20,1075.89 938.35,1087.93 917.50,1075.89 917.50,1051.82" fill="#6ad94d"/>
<polygon points="985.97,1039.78 1006.82,1051.82 1006.82,1075.89 985.97,1087.93 965.12,1075.89 965.12,1051.82" fill="#6ad94d"/>
<polygon points="1033.59,1039.78 1054.44,1051.82 1054.44,1075.89 1033.59,1087.93 1012.74,1075.89 1012.74,1051.82" fill="#6ad94d"/>
<polygon points="1081.21,1039.78 1102.06,1051.82 1102.06,1075.89 1081.21,1087.93 1060.36,1075.89 1060.36,1051.82" fill="#6ad94d"/>
<polygon points="1128.83,1039.78 1149.68,1051.82 1149.68,1075.89 1128.83,1087.93 1107.98,1075.89 1107.98,1051.82" fill="#6ad94d"/>
<polygon points="1176.45,1039.78 1197.30,1051.82 1197.30,1075.89 1176.45,1087.93 1155.60,1075.89 1155.60,1051.82" fill="#6ad94d"/>
<polygon points="1224.07,1039.78 1244.92,1051.82 1244.92,1075.89 1224.07,1087.93 1203.22,1075.89 1203.22,1051.82" fill="#6ad94d"/>
<polygon points="1271.69,1039.78 1292.54,1051.82 1292.54,1075.89 1271.69,1087.93 1250.84,1075.89 1250.84,1051.82" fill="#6ad94d"/>
<polygon points="1319.31,1039.78 1340.16,1051.82 1340.16,1075.89 1319.31,1087.93 1298.46,1075.89 1298.46,1051.82" fill="#6ad94d"/>
<polygon points="1366.93,1039.78 1387.78,1051.82 1387.78,1075.89 1366.93,1087.93 1346.08,1075.89 1346.08,1051.82" fill="#6ad94d"/>
<polygon points="1414.55,1039.78 1435.40,1051.82 1435.40,1075.89 1414.55,1087.93 1393.70,1075.89 1393.70,1051.82" fill="#6ad94d"/>
<polygon points="1462.17,1039.78 1483.02,1051.82 1483.02,1075.89 1462.17,1087.93 1441.32,1075.89 1441.32,1051.82" fill="#6ad94d"/>
<polygon points="962.16,1081.02 983.01,1093.06 983.01,1117.13 962.16,1129.17 941.31,1117.13 941.31,1093.06" fill="#6ad94d"/>
<polygon points="1009.78,1081.02 1030.63,1093.06 1030.63,1117.13 1009.78,1129.17 988.93,1117.13 988.93,1093.06" fill="#6ad94d"/>
<polygon points="1057.40,1081.02 1078.25,1093.06 1078.25,1117.13 1057.40,1129.17 1036.55,1117.13 1036.55,1093.06" fill="#6ad94d"/>
<polygon points="1105.02,1081.02 1125.87,1093.06 1125.87,1117.13 1105.02,1129.17 1084.17,1117.13 1084.17,1093.06" fill="#6ad94d"/>
<polygon points="1152.64,1081.02 1173.49,1093.06 1173.49,1117.13 1152.64,1129.17 1131.79,1117.13 1131.79,1093.06" fill="#6ad94d"/>
<polygon points="1200.26,1081.02 1221.11,1093.06 1221.11,1117.13 1200.26,1129.17 1179.41,1117.13 1179.41,1093.06" fill="#6ad94d"/>
<polygon points="1247.88,1081.02 1268.73,1093.06 1268.73,1117.13 1247.88,1129.17 1227.03,1117.13 1227.03,1093.06" fill="#6ad94d"/>
<polygon points="1295.50,1081.02 1316.35,1093.06 1316.35,1117.13 1295.50,1129.17 1274.65,1117.13 1274.65,1093.06" fill="#6ad94d"/>
<polygon points="1343.12,1081.02 1363.97,1093.06 1363.97,1117.13 1343.12,1129.17 1322.27,1117.13 1322.27,1093.06" fill="#6ad94d"/>
<polygon points="1390.74,1081.02 1411.59,1093.06 1411.59,1117.13 1390.74,1129.17 1369.89,1117.13 1369.89,1093.06" fill="#6ad94d"/>
<polygon points="1438.36,1081.02 1459.21,1093.06 1459.21,1117.13 1438.36,1129.17 1417.51,1117.13 1417.51,1093.06" fill="#6ad94d"/>
<polygon points="1485.98,1081.02 1506.83,1093.06 1506.83,1117.13 1485.98,1129.17 1465.13,1117.13 1465.13,1093.06" fill="#6ad94d"/>
</svg>
<div style="position:absolute;left:0;top:1125px;width:8px;height:40px;background:#000"></div>
</body></html>
